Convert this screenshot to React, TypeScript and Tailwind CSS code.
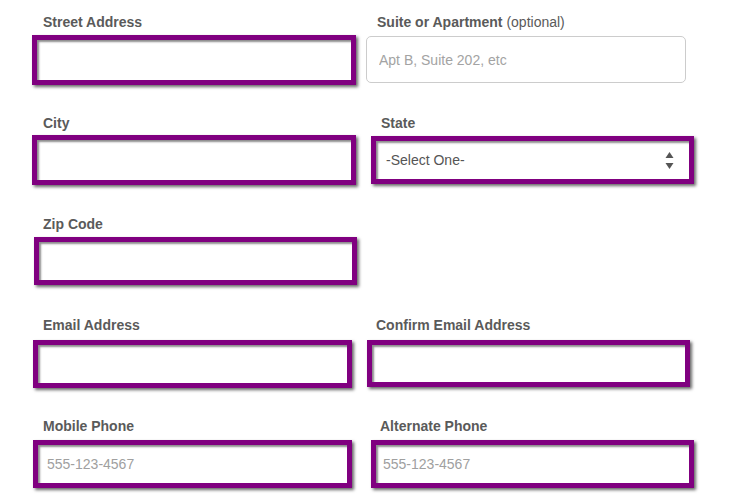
import React from "react";

const purpleBox =
  "border-[5px] border-[#800080] bg-white shadow-[inset_2px_2px_2px_rgba(0,0,0,0.45),2px_2px_3px_rgba(0,0,0,0.6)]";

function Label({ children, pl }: { children: React.ReactNode; pl: string }) {
  return (
    <div className={`h-[16px] leading-[16px] text-[14px] font-bold text-[#5a5a5a] ${pl}`}>{children}</div>
  );
}

function PurpleInput({
  w,
  h,
  mt,
  placeholder,
  px,
}: {
  w: string;
  h: string;
  mt: string;
  placeholder?: string;
  px?: string;
}) {
  return (
    <input
      readOnly
      placeholder={placeholder}
      className={`${purpleBox} ${w} ${h} ${mt} ${px ?? "px-[9px]"} text-[14px] text-[#555] placeholder:text-[#a0a0a0] outline-none`}
    />
  );
}

export default function App() {
  return (
    <div
      className="w-[733px] h-[501px] bg-white overflow-hidden flex flex-col"
      style={{ fontFamily: '"Liberation Sans", Arial, sans-serif' }}
    >
      {/* Row 1 */}
      <div className="flex mt-[14px]">
        <div className="flex flex-col ml-[32px] w-[324px]">
          <Label pl="pl-[11px]">Street Address</Label>
          <PurpleInput w="w-[324px]" h="h-[50px]" mt="mt-[5px]" />
        </div>
        <div className="flex flex-col ml-[10px] w-[320px]">
          <Label pl="pl-[11px]">
            Suite or Apartment <span className="font-normal">(optional)</span>
          </Label>
          <input
            readOnly
            placeholder="Apt B, Suite 202, etc"
            className="mt-[6px] w-[320px] h-[47px] border border-[#cccccc] rounded-[5px] bg-white px-[12px] text-[14px] text-[#555] placeholder:text-[#a3a3a3] outline-none"
          />
        </div>
      </div>

      {/* Row 2 */}
      <div className="flex mt-[30px]">
        <div className="flex flex-col ml-[32px] w-[324px]">
          <Label pl="pl-[11px]">City</Label>
          <PurpleInput w="w-[324px]" h="h-[50px]" mt="mt-[4px]" />
        </div>
        <div className="flex flex-col ml-[15px] w-[323px]">
          <Label pl="pl-[10px]">State</Label>
          <div className={`${purpleBox} mt-[5px] w-[323px] h-[48px] flex items-center justify-between pl-[10px] pr-[15px]`}>
            <span className="text-[14px] text-[#555]">-Select One-</span>
            <svg width="9" height="18" viewBox="0 0 9 18" className="text-[#555]">
              <path d="M4.5 1 L8.5 7 L0.5 7 Z" fill="currentColor" />
              <path d="M4.5 18 L8.5 12 L0.5 12 Z" fill="currentColor" />
            </svg>
          </div>
        </div>
      </div>

      {/* Row 3 */}
      <div className="flex mt-[31px]">
        <div className="flex flex-col ml-[34px] w-[323px]">
          <Label pl="pl-[9px]">Zip Code</Label>
          <PurpleInput w="w-[323px]" h="h-[48px]" mt="mt-[5px]" />
        </div>
      </div>

      {/* Row 4 */}
      <div className="flex mt-[32px]">
        <div className="flex flex-col ml-[33px] w-[319px]">
          <Label pl="pl-[10px]">Email Address</Label>
          <PurpleInput w="w-[319px]" h="h-[48px]" mt="mt-[7px]" />
        </div>
        <div className="flex flex-col ml-[15px] w-[323px]">
          <Label pl="pl-[9px]">Confirm Email Address</Label>
          <PurpleInput w="w-[323px]" h="h-[47px]" mt="mt-[7px]" />
        </div>
      </div>

      {/* Row 5 */}
      <div className="flex mt-[30px]">
        <div className="flex flex-col ml-[33px] w-[319px]">
          <Label pl="pl-[10px]">Mobile Phone</Label>
          <PurpleInput w="w-[319px]" h="h-[48px]" mt="mt-[6px]" placeholder="555-123-4567" px="px-[9px]" />
        </div>
        <div className="flex flex-col ml-[19px] w-[323px]">
          <Label pl="pl-[9px]">Alternate Phone</Label>
          <PurpleInput w="w-[323px]" h="h-[48px]" mt="mt-[6px]" placeholder="555-123-4567" px="px-[7px]" />
        </div>
      </div>
    </div>
  );
}
